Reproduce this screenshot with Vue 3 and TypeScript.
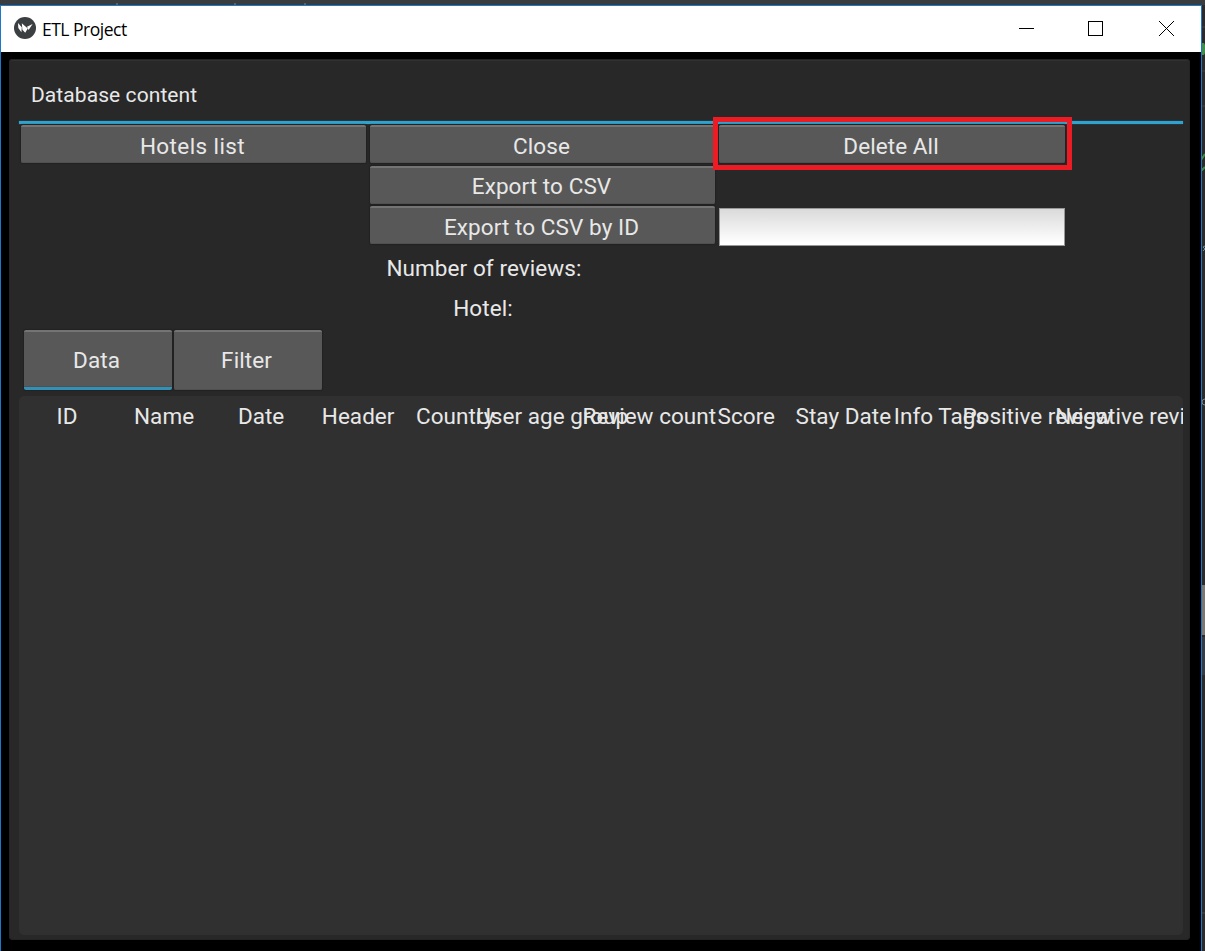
<script setup lang="ts">
const columns: string[] = [
  'ID', 'Name', 'Date', 'Header', 'Country', 'User age group',
  'Review count', 'Score', 'Stay Date', 'Info Tags', 'Positive review', 'Negative review',
]
</script>

<template>
  <div class="desktop">
    <svg class="backdrop" width="1205" height="951" viewBox="0 0 1205 951" aria-hidden="true">
      <rect width="1205" height="951" fill="#292b2c" />
      <rect width="1205" height="5" fill="#393d3f" />
      <path d="M116 4h2M234 4h2M304 4h2" stroke="#858585" />
      <path d="M1202 27h3M1202 71h3M1202 106h3" stroke="#404344" />
      <path d="M1202 43h2l1 2v8l-1 2h-2z" fill="#408e4b" />
      <path d="M1201 160l4-6M1201 171l4-4" stroke="#408e4b" stroke-width="2" />
      <path d="M1205 246l-2 1 2 2-2 2" stroke="#6c8da8" fill="none" />
      <circle cx="1205" cy="402" r="3" stroke="#798792" fill="none" />
      <rect x="1202" y="585" width="3" height="50" fill="#7b7775" />
      <rect x="1202" y="637" width="3" height="38" fill="#343b49" />
      <path d="M1202 913h3" stroke="#484b4c" />
    </svg>
    <main class="window">
      <header class="titlebar">
        <svg class="logo" width="22" height="22" viewBox="0 0 22 22">
          <circle cx="11" cy="11" r="11" fill="#3c3f41" />
          <path d="M4 6l3.8 4.2-.4 5L4.3 11zM7.8 6.2l6 5.3-2.6 4.3-2.8-3zM13 9.8L18.6 7l-4 6z" fill="#fff" />
        </svg>
        <span class="title">ETL Project</span>
        <svg class="controls" width="156" height="17" viewBox="0 0 156 17" shape-rendering="crispEdges">
          <path d="M0 8.5h15" stroke="#000" />
          <rect x="69.5" y="1.5" width="14" height="14" fill="none" stroke="#000" />
          <path d="M140 1l15 15M155 1L140 16" stroke="#000" shape-rendering="auto" />
        </svg>
      </header>
      <section class="popup">
        <h1>Database content</h1>
        <div class="rule"></div>
        <div class="actions">
          <button class="btn wide">Hotels list</button>
          <div class="stack">
            <button class="btn">Close</button>
            <button class="btn">Export to CSV</button>
            <button class="btn">Export to CSV by ID</button>
            <div class="label">Number of reviews:</div>
            <div class="label hotel">Hotel:</div>
          </div>
          <div class="stack last">
            <div class="marked"><button class="btn">Delete All</button></div>
            <input class="field" type="text" aria-label="Hotel ID" />
          </div>
        </div>
        <nav class="tabs">
          <button class="tab active">Data</button>
          <button class="tab">Filter</button>
        </nav>
        <div class="panel">
          <div class="heads">
            <div v-for="name in columns" :key="name" class="head"><span>{{ name }}</span></div>
          </div>
        </div>
      </section>
    </main>
  </div>
</template>

<style>
body { overflow: hidden; background: #292b2c; }
</style>

<style scoped>
* { box-sizing: border-box; }
.desktop {
  position: relative;
  width: 1205px;
  height: 951px;
  padding-top: 5px;
  overflow: hidden;
  font-family: Roboto, sans-serif;
  font-size: 22.5px;
  letter-spacing: 0.08px;
  color: #e8e8e8;
}
.backdrop { position: absolute; inset: 0; }
.window {
  position: relative;
  width: 1202px;
  height: 950px;
  border: 1px solid #1b79cb;
  background: #000;
}
.titlebar {
  display: flex;
  align-items: center;
  height: 46px;
  padding: 0 26px 2px 13px;
  background: #fff;
  color: #000;
}
.title {
  margin: 1px auto 0 6px;
  font-family: "Open Sans", "Noto Sans", sans-serif;
  font-size: 17.5px;
  letter-spacing: -0.5px;
}
.popup {
  display: flex;
  flex-direction: column;
  width: 1181px;
  height: 881px;
  margin: 7px 0 0 8px;
  padding: 0 7px 0 10px;
  border-radius: 4px;
  background: #282828;
  box-shadow: inset 0 0 0 1px #242424, inset 0 2px 1px #323232;
}
h1 {
  height: 62px;
  margin: 0;
  padding-left: 12px;
  line-height: 72px;
  font-size: 21px;
  font-weight: 400;
}
.rule { height: 3px; background: #2fa3d0; box-shadow: 0 0 1px #2fa3d0; }
.actions {
  display: grid;
  grid-template-columns: 345px 345px 346px;
  column-gap: 4px;
  align-items: start;
  height: 206px;
  padding: 1px 0 0 2px;
}
.stack { display: grid; grid-template-rows: repeat(5, 40.5px); }
.btn, .tab {
  display: block;
  width: 100%;
  height: 38px;
  padding: 1px 2px 0 0;
  border: 0;
  border-top: 2px solid #747474;
  border-radius: 2px;
  background: #585858;
  box-shadow: inset 0 -1px #505050, 0 0 1px 1px #222;
  color: #e8e8e8;
  font: inherit;
  letter-spacing: inherit;
}
.wide { letter-spacing: 0.4px; }
.label { width: 228px; text-align: center; line-height: 42px; }
.label.hotel { width: 226px; line-height: 43px; }
.marked { position: relative; height: 38px; }
.marked::after {
  content: "";
  position: absolute;
  inset: -8px -7px -7px -6px;
  border: 5px solid #ed1c24;
}
.field {
  grid-row: 3;
  width: 100%;
  height: 38px;
  margin-top: 2px;
  border: 1px solid #999;
  border-radius: 0;
  background: linear-gradient(#dadada, #fff 95%);
}
.tabs { display: flex; gap: 2px; height: 66px; padding-left: 5px; }
.tab { width: 148px; height: 60px; padding: 0 3px 2px 0; }
.tab.active { border-bottom: 3px solid #3191b7; padding-bottom: 0; }
.panel { height: 539px; overflow: hidden; border-radius: 5px; background: #303030; }
.heads { display: grid; grid-template-columns: repeat(12, 97.05px); letter-spacing: 0.03px; }
.head {
  display: flex;
  justify-content: center;
  line-height: 40px;
  white-space: nowrap;
}
.head span { position: relative; left: -0.5px; }
</style>
